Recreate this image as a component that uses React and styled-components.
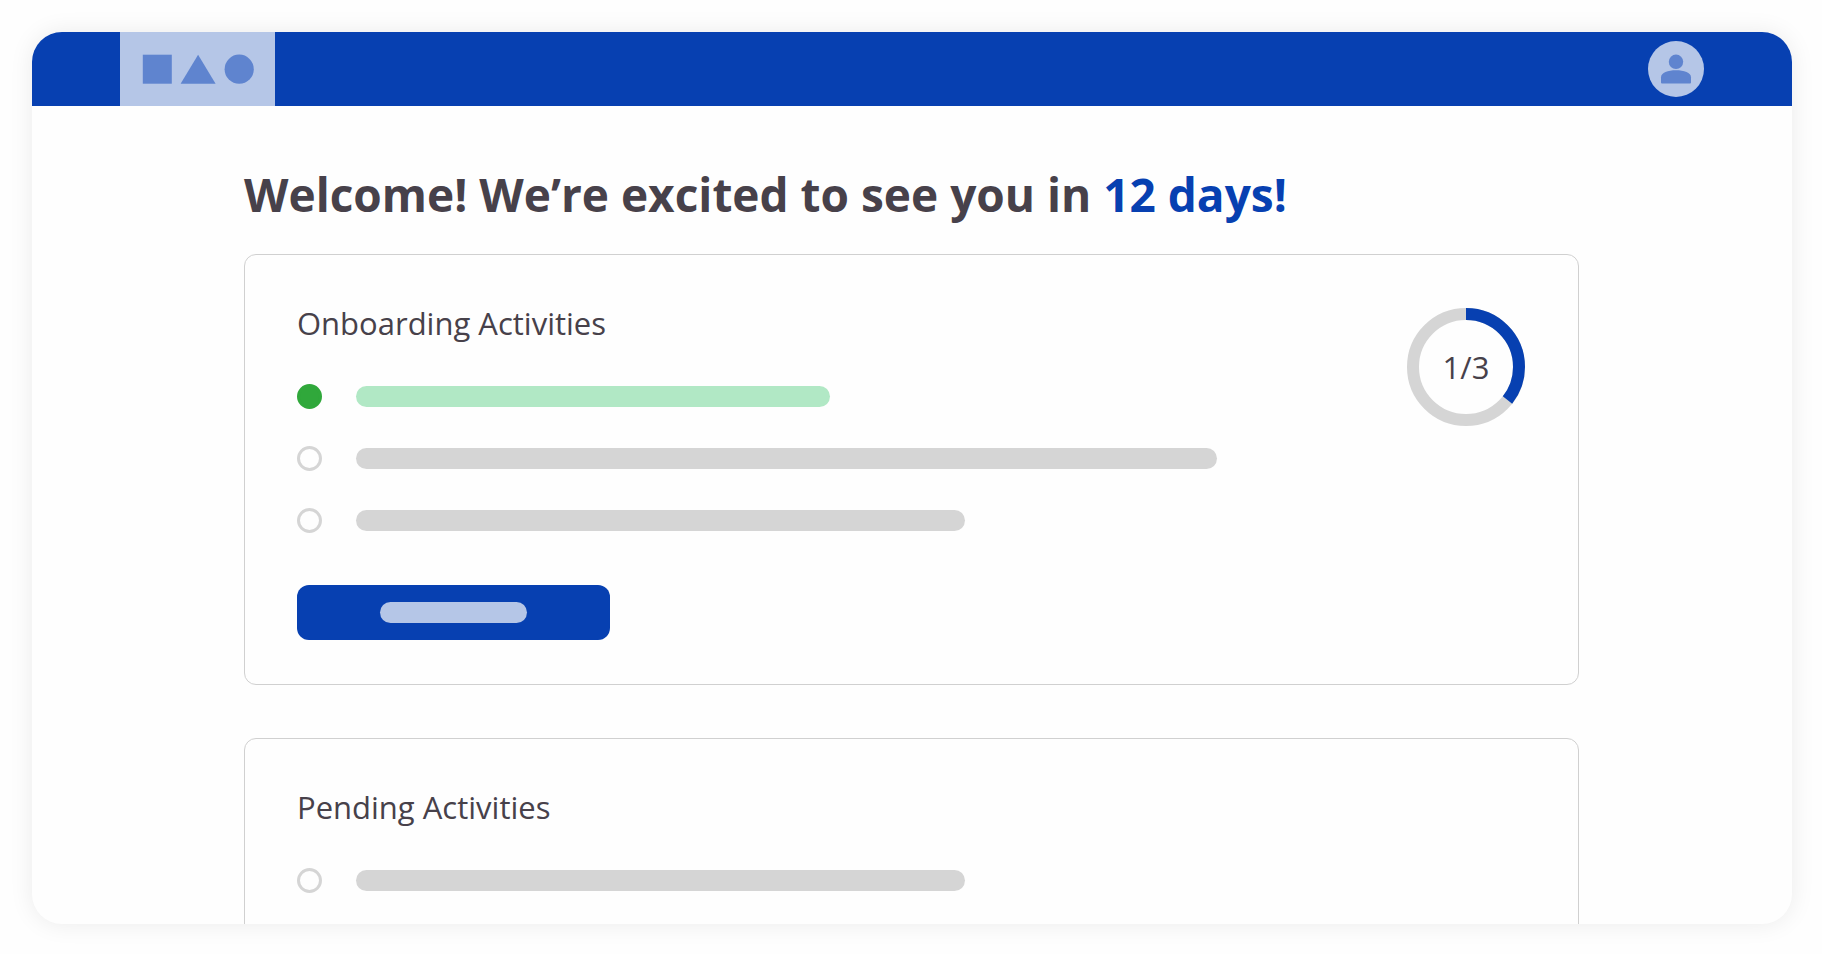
import { useState } from "react";
import styled, { createGlobalStyle } from "styled-components";

const blue = "#0740b1"
const lightBlue = "#b5c6e7"
const midBlue = "#5f84cf"
const gray = "#d5d5d5"
const textColor = "#47414a"

const onboarding = [
	{ id: "onboarding-1", label: "Onboarding activity 1", width: 474, done: true },
	{ id: "onboarding-2", label: "Onboarding activity 2", width: 861, done: false },
	{ id: "onboarding-3", label: "Onboarding activity 3", width: 609, done: false },
]

const pending = [
	{ id: "pending-1", label: "Pending activity 1", width: 609, done: false },
]


export default function App() {

	return (
		<Page>
			<GlobalStyle />
			<Window>
				<Header>
					<Logo />
					<Avatar aria-label="Profile">
						<svg width="32" height="32" viewBox="0 0 32 32" fill={midBlue}>
							<circle cx="16" cy="8.8" r="7.2" />
							<path d="M1 24.3C1 19.3 8 17.2 16 17.2S31 19.3 31 24.3V29.4Q31 30.4 30 30.4H2Q1 30.4 1 29.4Z" />
						</svg>
					</Avatar>
				</Header>
				<Content>
					<Title>Welcome! We’re excited to see you in <strong>12 days!</strong></Title>
					<Card>
						<Activities title="Onboarding Activities" items={onboarding} />
						<Progress />
						<StartButton aria-label="Continue"><ButtonLine /></StartButton>
					</Card>
					<Card>
						<Activities title="Pending Activities" items={pending} />
					</Card>
				</Content>
			</Window>
		</Page>
	)
}

function Logo() {
	return (
		<LogoBox href="#" aria-label="Home">
			<svg width="112" height="30" viewBox="0 0 112 30" fill={midBlue}>
				<rect x="0.8" y="0.7" width="29" height="29" />
				<path d="M56.1 0.7L73.6 29.7H38.6Z" />
				<circle cx="97.2" cy="15.2" r="14.6" />
			</svg>
		</LogoBox>
	)
}

function Activities(props) {

	const { title, items } = props
	const [done, setDone] = useState(items.filter(item => item.done).map(item => item.id))

	function toggle(id) {
		setDone(done.includes(id) ? done.filter(item => item !== id) : [...done, id])
	}

	return (
		<div>
			<CardTitle>{title}</CardTitle>
			<List>
				{items.map(item => (
					<Item key={item.id}>
						<Check
							id={item.id}
							type="checkbox"
							checked={done.includes(item.id)}
							onChange={() => toggle(item.id)}
						/>
						<Line
							htmlFor={item.id}
							aria-label={item.label}
							$width={item.width}
							$done={done.includes(item.id)}
						/>
					</Item>
				))}
			</List>
		</div>
	)
}

function Progress() {
	return (
		<Ring>
			<svg viewBox="0 0 118 118">
				<circle cx="59" cy="59" r="53" fill="none" stroke={gray} strokeWidth="12" />
				<circle cx="59" cy="59" r="53" fill="none" stroke={blue} strokeWidth="12"
					pathLength="1000" strokeDasharray="357 643" transform="rotate(-90 59 59)" />
			</svg>
			<span>1/3</span>
		</Ring>
	)
}


const GlobalStyle = createGlobalStyle`
	* {
		box-sizing: border-box;
	}

	body {
		margin: 0;
		background: #fefefe;
		color: ${textColor};
		font-family: "Open Sans", "Noto Sans", sans-serif;
	}
`

const Page = styled.div`
	height: 100vh;
	padding: 32px 30px 30px 32px;
`

const Window = styled.div`
	height: 100%;
	overflow: hidden;
	border-radius: 30px;
	background: #fefefe;
	box-shadow: 0 0 24px rgba(0, 0, 0, 0.08);
`

const Header = styled.header`
	display: flex;
	align-items: center;
	justify-content: space-between;
	height: 74px;
	padding: 0 88px;
	background: ${blue};
`

const LogoBox = styled.a`
	display: flex;
	align-items: center;
	justify-content: center;
	width: 155px;
	height: 100%;
	background: ${lightBlue};
`

const Avatar = styled.button`
	display: flex;
	align-items: center;
	justify-content: center;
	width: 56px;
	height: 56px;
	padding: 0;
	border: none;
	border-radius: 50%;
	background: ${lightBlue};
`

const Content = styled.main`
	display: flex;
	flex-direction: column;
	padding: 56px 213px 56px 212px;
`

const Title = styled.h1`
	margin: 0 0 28px;
	font-size: 46px;
	line-height: 64px;
	font-weight: 700;

	strong {
		font-weight: 700;
		color: ${blue};
	}
`

const Card = styled.section`
	display: grid;
	grid-template-columns: 1fr auto;
	align-items: start;
	padding: 53px 53px 44px 52px;
	border: 1px solid #d0d0d0;
	border-radius: 12px;

	& + & {
		margin-top: 53px;
	}
`

const CardTitle = styled.h2`
	margin: 0;
	font-size: 31px;
	line-height: 30px;
	font-weight: 400;
`

const List = styled.ul`
	display: flex;
	flex-direction: column;
	gap: 37px;
	margin: 0;
	padding: 46px 0 0;
	list-style: none;
`

const Item = styled.li`
	display: flex;
	align-items: center;
	gap: 34px;
`

const Check = styled.input`
	appearance: none;
	flex: none;
	width: 25px;
	height: 25px;
	margin: 0;
	border: 3px solid ${gray};
	border-radius: 50%;

	&:checked {
		border-color: #30a83b;
		background: #30a83b;
	}
`

const Line = styled.label`
	width: ${props => props.$width}px;
	max-width: 100%;
	height: 21px;
	border-radius: 11px;
	background: ${props => props.$done ? "#b1e8c5" : gray};
`

const Ring = styled.div`
	display: grid;
	place-items: center;
	width: 118px;
	height: 118px;
	font-size: 31px;
	line-height: 36px;

	svg, span {
		grid-area: 1 / 1;
	}
`

const StartButton = styled.button`
	display: flex;
	align-items: center;
	justify-content: center;
	width: 313px;
	height: 55px;
	margin-top: 52px;
	padding: 0;
	border: none;
	border-radius: 12px;
	background: ${blue};
`

const ButtonLine = styled.span`
	width: 147px;
	height: 21px;
	border-radius: 11px;
	background: ${lightBlue};
`
